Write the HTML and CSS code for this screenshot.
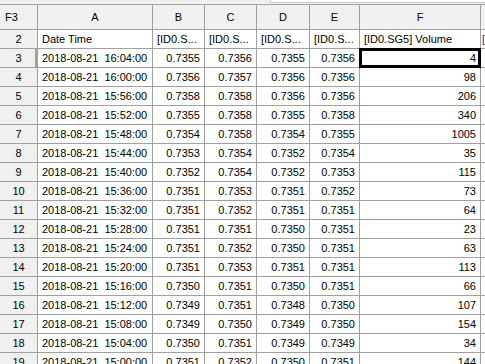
FILE: index.html
```html
<!DOCTYPE html>
<html lang="en">
<head>
    <meta charset="UTF-8">
    <title>Quotes sheet</title>
    <link rel="stylesheet" href="styles.css">
</head>
<body>
<div class="topbar">
    <div class="formula"></div>
</div>

<div class="sheet">
    <div class="row head">
        <div class="cell corner">F3</div>
        <div class="cell">A</div>
        <div class="cell">B</div>
        <div class="cell">C</div>
        <div class="cell">D</div>
        <div class="cell">E</div>
        <div class="cell">F</div>
        <div class="cell"></div>
    </div>

    <div class="row">
        <div class="cell num">2</div>
        <div class="cell text">Date Time</div>
        <div class="cell text">[ID0.S...</div>
        <div class="cell text">[ID0.S...</div>
        <div class="cell text">[ID0.S...</div>
        <div class="cell text">[ID0.S...</div>
        <div class="cell text">[ID0.SG5] Volume</div>
        <div class="cell text extra">[</div>
    </div>

    <div class="row">
        <div class="cell num active">3</div>
        <div class="cell date">2018-08-21  16:04:00</div>
        <div class="cell val">0.7355</div>
        <div class="cell val">0.7356</div>
        <div class="cell val">0.7355</div>
        <div class="cell val">0.7356</div>
        <div class="cell val selected">4</div>
        <div class="cell"></div>
    </div>
    <div class="row">
        <div class="cell num">4</div>
        <div class="cell date">2018-08-21  16:00:00</div>
        <div class="cell val">0.7356</div>
        <div class="cell val">0.7357</div>
        <div class="cell val">0.7356</div>
        <div class="cell val">0.7356</div>
        <div class="cell val">98</div>
        <div class="cell"></div>
    </div>
    <div class="row">
        <div class="cell num">5</div>
        <div class="cell date">2018-08-21  15:56:00</div>
        <div class="cell val">0.7358</div>
        <div class="cell val">0.7358</div>
        <div class="cell val">0.7356</div>
        <div class="cell val">0.7356</div>
        <div class="cell val">206</div>
        <div class="cell"></div>
    </div>
    <div class="row">
        <div class="cell num">6</div>
        <div class="cell date">2018-08-21  15:52:00</div>
        <div class="cell val">0.7355</div>
        <div class="cell val">0.7358</div>
        <div class="cell val">0.7355</div>
        <div class="cell val">0.7358</div>
        <div class="cell val">340</div>
        <div class="cell"></div>
    </div>
    <div class="row">
        <div class="cell num">7</div>
        <div class="cell date">2018-08-21  15:48:00</div>
        <div class="cell val">0.7354</div>
        <div class="cell val">0.7358</div>
        <div class="cell val">0.7354</div>
        <div class="cell val">0.7355</div>
        <div class="cell val">1005</div>
        <div class="cell"></div>
    </div>
    <div class="row">
        <div class="cell num">8</div>
        <div class="cell date">2018-08-21  15:44:00</div>
        <div class="cell val">0.7353</div>
        <div class="cell val">0.7354</div>
        <div class="cell val">0.7352</div>
        <div class="cell val">0.7354</div>
        <div class="cell val">35</div>
        <div class="cell"></div>
    </div>
    <div class="row">
        <div class="cell num">9</div>
        <div class="cell date">2018-08-21  15:40:00</div>
        <div class="cell val">0.7352</div>
        <div class="cell val">0.7354</div>
        <div class="cell val">0.7352</div>
        <div class="cell val">0.7353</div>
        <div class="cell val">115</div>
        <div class="cell"></div>
    </div>
    <div class="row">
        <div class="cell num">10</div>
        <div class="cell date">2018-08-21  15:36:00</div>
        <div class="cell val">0.7351</div>
        <div class="cell val">0.7353</div>
        <div class="cell val">0.7351</div>
        <div class="cell val">0.7352</div>
        <div class="cell val">73</div>
        <div class="cell"></div>
    </div>
    <div class="row">
        <div class="cell num">11</div>
        <div class="cell date">2018-08-21  15:32:00</div>
        <div class="cell val">0.7351</div>
        <div class="cell val">0.7352</div>
        <div class="cell val">0.7351</div>
        <div class="cell val">0.7351</div>
        <div class="cell val">64</div>
        <div class="cell"></div>
    </div>
    <div class="row">
        <div class="cell num">12</div>
        <div class="cell date">2018-08-21  15:28:00</div>
        <div class="cell val">0.7351</div>
        <div class="cell val">0.7351</div>
        <div class="cell val">0.7350</div>
        <div class="cell val">0.7351</div>
        <div class="cell val">23</div>
        <div class="cell"></div>
    </div>
    <div class="row">
        <div class="cell num">13</div>
        <div class="cell date">2018-08-21  15:24:00</div>
        <div class="cell val">0.7351</div>
        <div class="cell val">0.7352</div>
        <div class="cell val">0.7350</div>
        <div class="cell val">0.7351</div>
        <div class="cell val">63</div>
        <div class="cell"></div>
    </div>
    <div class="row">
        <div class="cell num">14</div>
        <div class="cell date">2018-08-21  15:20:00</div>
        <div class="cell val">0.7351</div>
        <div class="cell val">0.7353</div>
        <div class="cell val">0.7351</div>
        <div class="cell val">0.7351</div>
        <div class="cell val">113</div>
        <div class="cell"></div>
    </div>
    <div class="row">
        <div class="cell num">15</div>
        <div class="cell date">2018-08-21  15:16:00</div>
        <div class="cell val">0.7350</div>
        <div class="cell val">0.7351</div>
        <div class="cell val">0.7350</div>
        <div class="cell val">0.7351</div>
        <div class="cell val">66</div>
        <div class="cell"></div>
    </div>
    <div class="row">
        <div class="cell num">16</div>
        <div class="cell date">2018-08-21  15:12:00</div>
        <div class="cell val">0.7349</div>
        <div class="cell val">0.7351</div>
        <div class="cell val">0.7348</div>
        <div class="cell val">0.7350</div>
        <div class="cell val">107</div>
        <div class="cell"></div>
    </div>
    <div class="row">
        <div class="cell num">17</div>
        <div class="cell date">2018-08-21  15:08:00</div>
        <div class="cell val">0.7349</div>
        <div class="cell val">0.7350</div>
        <div class="cell val">0.7349</div>
        <div class="cell val">0.7350</div>
        <div class="cell val">154</div>
        <div class="cell"></div>
    </div>
    <div class="row">
        <div class="cell num">18</div>
        <div class="cell date">2018-08-21  15:04:00</div>
        <div class="cell val">0.7350</div>
        <div class="cell val">0.7351</div>
        <div class="cell val">0.7349</div>
        <div class="cell val">0.7349</div>
        <div class="cell val">34</div>
        <div class="cell"></div>
    </div>
    <div class="row">
        <div class="cell num">19</div>
        <div class="cell date">2018-08-21  15:00:00</div>
        <div class="cell val">0.7351</div>
        <div class="cell val">0.7352</div>
        <div class="cell val">0.7350</div>
        <div class="cell val">0.7351</div>
        <div class="cell val">144</div>
        <div class="cell"></div>
    </div>
</div>
</body>
</html>
```

FILE: styles.css
```css
* {
    margin: 0;
    padding: 0;
    box-sizing: border-box;
}

body {
    font-family: 'Liberation Sans', Arial, sans-serif;
    font-size: 11px;
    color: #000;
    background: #f0f0f0;
    width: 485px;
    height: 364px;
    overflow: hidden;
}

.topbar {
    height: 4px;
    display: flex;
    justify-content: flex-end;
    background: #f0f0f0;
}

.formula {
    width: 215px;
    height: 3px;
    background: #fff;
    border-bottom: 1px solid #c8c8c8;
    border-left: 1px solid #c8c8c8;
}

.sheet {
    display: flex;
    flex-direction: column;
    gap: 1px;
    padding-top: 1px;
    background: #a0a0a0;
}

.row {
    display: grid;
    grid-template-columns: 37px 114px 51px 51px 52px 49px 120px 1fr;
    gap: 1px;
    height: 18px;
}

.row.head {
    height: 24px;
}

.cell {
    background: #fff;
    line-height: 18px;
    white-space: nowrap;
    overflow: hidden;
    position: relative;
}

.head .cell {
    background: #f0f0f0;
    line-height: 24px;
    text-align: center;
}

.head .corner {
    text-align: left;
    padding-left: 5px;
}

.num {
    background: #f0f0f0;
    text-align: center;
}

.num.active {
    box-shadow: inset -2px 0 0 #a0a0a0;
}

.text {
    padding: 0 4px;
}

.extra {
    color: #800080;
    padding: 0 1px;
}

.date {
    padding-left: 4px;
    white-space: pre;
}

.val {
    text-align: right;
    padding-right: 4px;
}

.selected {
    overflow: visible;
    z-index: 1;
    outline: 3px solid #000;
    outline-offset: -2px;
}
```
